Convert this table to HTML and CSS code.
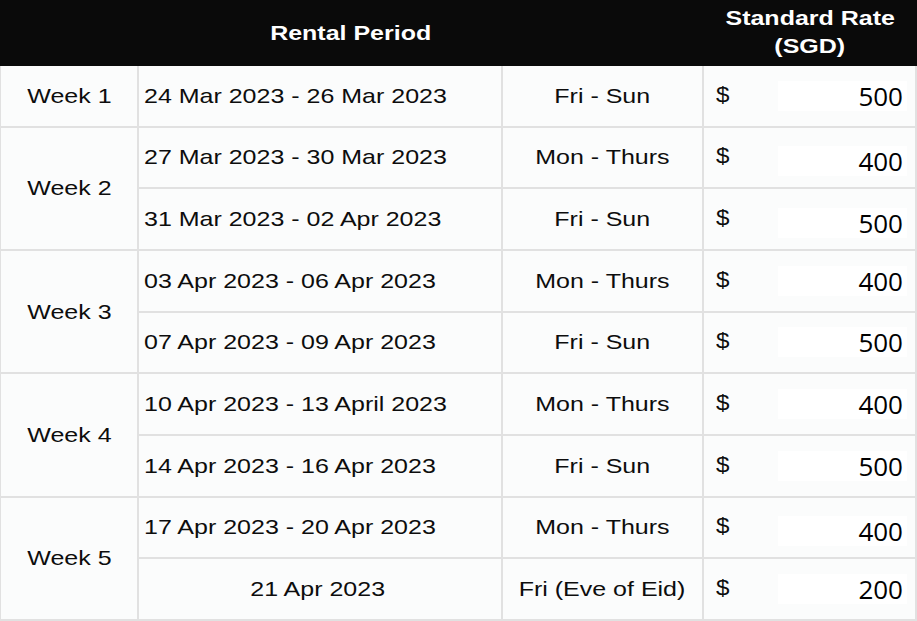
FILE: index.html
```html
<!DOCTYPE html>
<html>
<head>
<meta charset="utf-8">
<link rel="stylesheet" href="styles.css">
</head>
<body>
<div class="sheet">
  <div class="head">
    <div class="hcell"><span class="wide">Rental Period</span></div>
    <div class="hcell"><span class="wide">Standard Rate</span><span class="wide">(SGD)</span></div>
  </div>
  <div class="grid">
    <div class="cell week r1 s1"><span class="wide">Week 1</span></div>
    <div class="cell date r1"><span class="wide">24 Mar 2023 - 26 Mar 2023</span></div>
    <div class="cell day r1"><span class="wide">Fri - Sun</span></div>
    <div class="cell rate r1"><span class="cur">$</span><span class="amt">500</span></div>

    <div class="cell week r2 s2"><span class="wide">Week 2</span></div>
    <div class="cell date r2"><span class="wide">27 Mar 2023 - 30 Mar 2023</span></div>
    <div class="cell day r2"><span class="wide">Mon - Thurs</span></div>
    <div class="cell rate r2"><span class="cur">$</span><span class="amt low">400</span></div>
    <div class="cell date r3"><span class="wide">31 Mar 2023 - 02 Apr 2023</span></div>
    <div class="cell day r3"><span class="wide">Fri - Sun</span></div>
    <div class="cell rate r3"><span class="cur">$</span><span class="amt low">500</span></div>

    <div class="cell week r4 s2"><span class="wide">Week 3</span></div>
    <div class="cell date r4"><span class="wide">03 Apr 2023 - 06 Apr 2023</span></div>
    <div class="cell day r4"><span class="wide">Mon - Thurs</span></div>
    <div class="cell rate r4"><span class="cur">$</span><span class="amt">400</span></div>
    <div class="cell date r5"><span class="wide">07 Apr 2023 - 09 Apr 2023</span></div>
    <div class="cell day r5"><span class="wide">Fri - Sun</span></div>
    <div class="cell rate r5"><span class="cur">$</span><span class="amt">500</span></div>

    <div class="cell week r6 s2"><span class="wide">Week 4</span></div>
    <div class="cell date r6"><span class="wide">10 Apr 2023 - 13 April 2023</span></div>
    <div class="cell day r6"><span class="wide">Mon - Thurs</span></div>
    <div class="cell rate r6"><span class="cur">$</span><span class="amt">400</span></div>
    <div class="cell date r7"><span class="wide">14 Apr 2023 - 16 Apr 2023</span></div>
    <div class="cell day r7"><span class="wide">Fri - Sun</span></div>
    <div class="cell rate r7"><span class="cur">$</span><span class="amt">500</span></div>

    <div class="cell week r8 s2"><span class="wide">Week 5</span></div>
    <div class="cell date r8"><span class="wide">17 Apr 2023 - 20 Apr 2023</span></div>
    <div class="cell day r8"><span class="wide">Mon - Thurs</span></div>
    <div class="cell rate r8"><span class="cur">$</span><span class="amt low">400</span></div>
    <div class="cell date center r9"><span class="wide">21 Apr 2023</span></div>
    <div class="cell day r9"><span class="wide">Fri (Eve of Eid)</span></div>
    <div class="cell rate r9"><span class="cur">$</span><span class="amt">200</span></div>
  </div>
</div>
</body>
</html>
```
FILE: styles.css
```css
html, body {
  margin: 0;
  padding: 0;
  background: #ffffff;
}

.sheet {
  width: 917px;
  height: 621px;
  display: flex;
  flex-direction: column;
  font-family: "Liberation Sans", Arial, sans-serif;
  color: #0d0d0d;
  overflow: hidden;
}

.head {
  height: 66px;
  flex: none;
  background: #0a0a0a;
  display: grid;
  grid-template-columns: 1fr 214px;
  color: #ffffff;
  font-weight: bold;
  font-size: 21px;
}

.hcell {
  display: flex;
  flex-direction: column;
  align-items: center;
  justify-content: center;
  line-height: 28px;
}

.hcell:first-child {
  padding-right: 2px;
}

.hcell:last-child {
  padding-bottom: 2px;
}

.wide {
  display: inline-block;
  transform: scaleX(1.19);
  transform-origin: center;
  white-space: nowrap;
}

.grid {
  flex: 1;
  display: grid;
  grid-template-columns: 136px 362px 199px 1fr;
  grid-template-rows: repeat(9, 1fr);
  gap: 2px;
  padding: 0 2px 2px 1px;
  background: #e1e1e1;
}

.cell {
  background: #fbfcfc;
  display: flex;
  align-items: center;
  font-size: 21px;
  min-width: 0;
}

.week {
  grid-column: 1;
  justify-content: center;
}

.week.s2 { grid-row: span 2; }

.date {
  grid-column: 2;
  padding-left: 5px;
  white-space: nowrap;
}

.date .wide {
  transform-origin: left center;
}

.date.center {
  justify-content: center;
  padding-left: 0;
  padding-right: 4px;
}

.date.center .wide {
  transform-origin: center;
}

.day {
  grid-column: 3;
  justify-content: center;
}

.rate {
  grid-column: 4;
  padding-left: 12px;
}

.r1 { grid-row-start: 1; }
.r2 { grid-row-start: 2; }
.r3 { grid-row-start: 3; }
.r4 { grid-row-start: 4; }
.r5 { grid-row-start: 5; }
.r6 { grid-row-start: 6; }
.r7 { grid-row-start: 7; }
.r8 { grid-row-start: 8; }
.r9 { grid-row-start: 9; }

.cur {
  display: inline-block;
  font-size: 22px;
  transform: scaleX(1.1);
  transform-origin: left center;
  margin-top: -2px;
}

.amt {
  margin-left: auto;
  margin-right: 8px;
  width: 125px;
  height: 30px;
  padding-right: 4px;
  background: #ffffff;
  font-family: "Open Sans", "Noto Sans", sans-serif;
  font-size: 26px;
  line-height: 30px;
  text-align: right;
  color: #000000;
}

.amt.low {
  margin-top: 8px;
}
```
